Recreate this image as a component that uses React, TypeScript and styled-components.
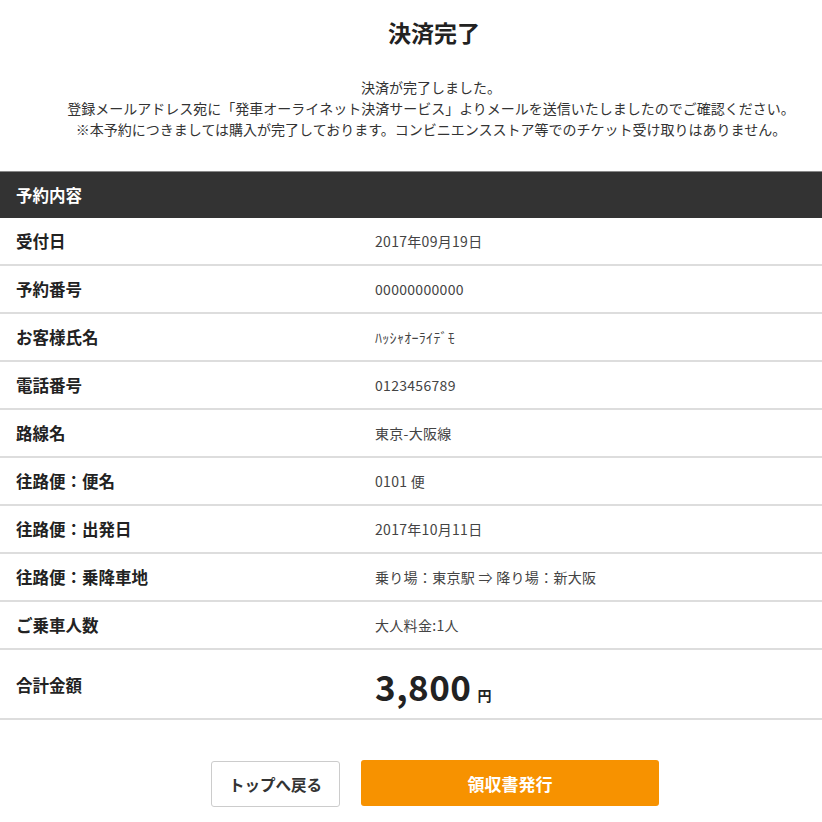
import React from "react";
import styled, { createGlobalStyle } from "styled-components";

const Global = createGlobalStyle`
  html, body { margin: 0; padding: 0; background: #fff; }
  body {
    font-family: "Noto Sans CJK JP", "Noto Sans", sans-serif;
    color: #333;
  }
`;

const Page = styled.div`
  width: 822px;
  display: flex;
  flex-direction: column;
`;

const Title = styled.h1`
  margin: 0;
  padding-top: 16px;
  font-size: 23px;
  line-height: 32px;
  font-weight: 700;
  text-align: center;
  padding-left: 46px;
  color: #222;
`;

const Intro = styled.div`
  margin-top: 29px;
  padding-left: 40px;
  text-align: center;
  font-size: 14px;
  line-height: 21px;
  color: #333;
`;

const Table = styled.div`
  margin-top: 31px;
  display: flex;
  flex-direction: column;
`;

const HeaderBar = styled.div`
  height: 47px;
  background: #333;
  border-top: 1px solid #888;
  box-sizing: border-box;
  display: flex;
  align-items: center;
  padding-left: 16px;
  color: #fff;
  font-weight: 700;
  font-size: 16.5px;
`;

const Row = styled.div<{ $tall?: boolean }>`
  display: grid;
  grid-template-columns: 375px 1fr;
  align-items: center;
  height: ${(p) => (p.$tall ? 70 : 48)}px;
  border-bottom: 2px solid #ddd;
  box-sizing: border-box;
  padding-top: ${(p) => (p.$tall ? 2 : 0)}px;
`;

const Label = styled.div`
  padding-left: 16px;
  font-size: 16.5px;
  font-weight: 700;
  color: #222;
`;

const Value = styled.div`
  font-size: 14px;
  color: #444;
  letter-spacing: 0.3px;
`;

const Amount = styled.div`
  display: flex;
  align-items: baseline;
  gap: 6px;
  color: #222;
`;

const Big = styled.span`
  font-size: 35px;
  font-weight: 700;
  letter-spacing: 0.5px;
`;

const Yen = styled.span`
  font-size: 14px;
  font-weight: 700;
`;

const Buttons = styled.div`
  display: flex;
  justify-content: center;
  gap: 21px;
  margin-top: 41px;
  padding-left: 48px;
  align-items: flex-start;
`;

const Button = styled.button<{ $primary?: boolean }>`
  font-family: inherit;
  height: 46px;
  border-radius: 3px;
  font-weight: 700;
  cursor: pointer;
  box-sizing: border-box;
  ${(p) =>
    p.$primary
      ? `
    width: 298px;
    background: #f79200;
    color: #fff;
    border: none;
    font-size: 17px;
    margin-top: -1px;
  `
      : `
    width: 129px;
    background: #fff;
    color: #333;
    border: 1px solid #ccc;
    font-size: 15.5px;
  `}
`;

const rows: [string, string][] = [
  ["受付日", "2017年09月19日"],
  ["予約番号", "00000000000"],
  ["お客様氏名", "ﾊｯｼｬｵｰﾗｲﾃﾞﾓ"],
  ["電話番号", "0123456789"],
  ["路線名", "東京-大阪線"],
  ["往路便：便名", "0101 便"],
  ["往路便：出発日", "2017年10月11日"],
  ["往路便：乗降車地", "乗り場：東京駅 ⇒ 降り場：新大阪"],
  ["ご乗車人数", "大人料金:1人"],
];

export default function App() {
  return (
    <>
      <Global />
      <Page>
        <Title>決済完了</Title>
        <Intro>
          決済が完了しました。
          <br />
          登録メールアドレス宛に「発車オーライネット決済サービス」よりメールを送信いたしましたのでご確認ください。
          <br />
          ※本予約につきましては購入が完了しております。コンビニエンスストア等でのチケット受け取りはありません。
        </Intro>
        <Table>
          <HeaderBar>予約内容</HeaderBar>
          {rows.map(([l, v]) => (
            <Row key={l}>
              <Label>{l}</Label>
              <Value>{v}</Value>
            </Row>
          ))}
          <Row $tall>
            <Label>合計金額</Label>
            <Amount>
              <Big>3,800</Big>
              <Yen>円</Yen>
            </Amount>
          </Row>
        </Table>
        <Buttons>
          <Button>トップへ戻る</Button>
          <Button $primary>領収書発行</Button>
        </Buttons>
      </Page>
    </>
  );
}
